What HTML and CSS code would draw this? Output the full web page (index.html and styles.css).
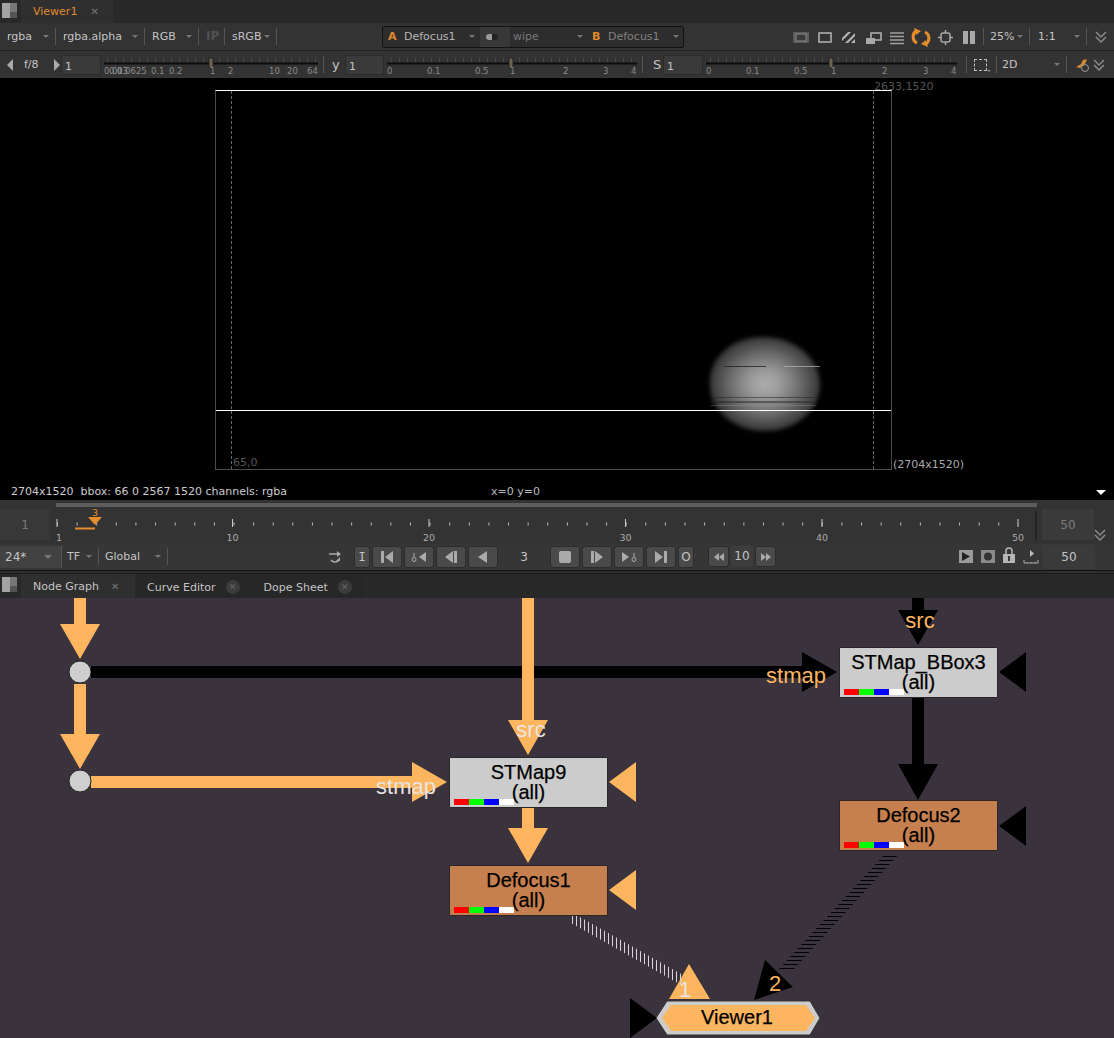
FILE: index.html
```html
<!DOCTYPE html>
<html lang="en">

<head>
  <meta charset="UTF-8">
  <meta name="viewport" content="width=device-width, initial-scale=1.0">
  <title>Viewer1 - Node Graph</title>
  <link rel="stylesheet" href="styles.css">
</head>

<body>
  <!-- viewer panel -->
  <div class="tabbar tabbar-top">
    <div class="panel-icon"><i></i><i></i></div>
    <div class="tab tab-viewer"><span class="tab-orange">Viewer1</span><span class="tab-x">&#10005;</span></div>
  </div>

  <div class="row row-one">
    <div class="combo w56">rgba<b class="arrow"></b></div>
    <div class="combo w89">rgba.alpha<b class="arrow"></b></div>
    <div class="combo w54">RGB<b class="arrow"></b></div>
    <div class="combo w26 dim">IP</div>
    <div class="combo w52">sRGB<b class="arrow"></b></div>
    <div class="wipe-box">
      <span class="letter">A</span>
      <span class="wipe-name w66">Defocus1</span>
      <b class="arrow"></b>
      <span class="toggle"><i></i></span>
      <span class="wipe-label">wipe</span>
      <b class="arrow arrow-wipe"></b>
      <span class="letter letter-b">B</span>
      <span class="wipe-name wipe-name-b">Defocus1</span>
      <b class="arrow"></b>
    </div>
    <svg class="tool-icons" width="190" height="22" viewBox="790 26 190 22">
      <rect x="793" y="32" width="16" height="11" fill="#5b5b5b" />
      <rect x="796" y="34" width="10" height="7" fill="#3a3a3a" stroke="#8a8a8a" />
      <rect x="819" y="33" width="12" height="9" fill="none" stroke="#b5b5b5" stroke-width="1.5" />
      <path d="M842 38l6-6h3l-9 9zM845 43l10-10v3l-7 7zM851 43l4-4v4z" fill="#b5b5b5" />
      <rect x="871" y="33" width="10" height="7" fill="none" stroke="#b5b5b5" stroke-width="1.5" />
      <rect x="866" y="38" width="9" height="6" fill="#a8a8a8" />
      <path d="M890 33h14M890 36.500h14M890 40h14M890 43.500h14" stroke="#a0a0a0" stroke-width="1.500" />
      <path d="M917 43a7 7 0 0 1-1-12M925 32a7 7 0 0 1 1 12" fill="none" stroke="#e58d2c" stroke-width="3" />
      <path d="M914 28l7 3-5 4zM928 47l-7-3 5-4z" fill="#e58d2c" />
      <rect x="941" y="33" width="9" height="9" rx="2" fill="none" stroke="#a8a8a8" stroke-width="1.5" />
      <path d="M945.500 30v3M945.500 42v3M938 37.500h3M950 37.500h3" stroke="#a8a8a8" stroke-width="1.500" />
      <rect x="963" y="31" width="5" height="13" fill="#a8a8a8" />
      <rect x="970" y="31" width="5" height="13" fill="#a8a8a8" />
    </svg>
    <div class="combo combo-zoom">25%<b class="arrow"></b></div>
    <div class="combo combo-ratio">1:1<b class="arrow"></b></div>
    <svg class="chevrons" width="12" height="12" viewBox="0 0 12 12">
      <path d="M1 1l5 5 5-5M1 6l5 5 5-5" />
    </svg>
  </div>

  <div class="row row-two">
    <svg class="step" width="8" height="12" viewBox="0 0 8 12"><path d="M7 0v12L1 6z" /></svg>
    <span class="fstop">f/8</span>
    <svg class="step step-next" width="8" height="12" viewBox="0 0 8 12"><path d="M1 0v12l6-6z" /></svg>
    <div class="value-box">1</div>
    <svg class="slider" width="214" height="27" viewBox="105 51 214 27">
      <path class="slider-ticks" d="M108 60h211" />
      <path class="slider-line" d="M105 63.500h214" />
      <rect class="slider-handle" x="210" y="58" width="4" height="10" />
      <text x="105" y="74">0.01</text>
      <text x="110" y="74">0.03</text>
      <text x="118" y="74">0.0625</text>
      <text x="152" y="74">0.1</text>
      <text x="170" y="74">0.2</text>
      <text x="211" y="74">1</text>
      <text x="229" y="74">2</text>
      <text x="270" y="74">10</text>
      <text x="288" y="74">20</text>
      <text x="308" y="74">64</text>
    </svg>
    <span class="row-sep sep-y"></span>
    <span class="channel channel-y">y</span>
    <div class="value-box value-y">1</div>
    <svg class="slider slider-y" width="250" height="27" viewBox="388 51 250 27">
      <path class="slider-ticks" d="M392 60h246" />
      <path class="slider-line" d="M388 63.500h250" />
      <rect class="slider-handle" x="510" y="58" width="4" height="10" />
      <text x="388" y="74">0</text>
      <text x="428" y="74">0.1</text>
      <text x="476" y="74">0.5</text>
      <text x="511" y="74">1</text>
      <text x="564" y="74">2</text>
      <text x="604" y="74">3</text>
      <text x="632" y="74">4</text>
    </svg>
    <span class="row-sep sep-s"></span>
    <span class="channel channel-s">S</span>
    <div class="value-box value-s">1</div>
    <svg class="slider slider-s" width="251" height="27" viewBox="707 51 251 27">
      <path class="slider-ticks" d="M711 60h247" />
      <path class="slider-line" d="M707 63.500h251" />
      <rect class="slider-handle" x="830" y="58" width="4" height="10" />
      <text x="707" y="74">0</text>
      <text x="747" y="74">0.1</text>
      <text x="795" y="74">0.5</text>
      <text x="832" y="74">1</text>
      <text x="883" y="74">2</text>
      <text x="924" y="74">3</text>
      <text x="952" y="74">4</text>
    </svg>
    <span class="row-sep sep-roi"></span>
    <span class="roi"></span>
    <div class="combo combo-mode">2D<b class="arrow"></b></div>
    <svg class="runner" width="16" height="16" viewBox="0 0 16 16">
      <path d="M2 10l5-3 2-4 4-1-2 5-5 4z" fill="#d98a32" />
      <circle cx="11" cy="11" r="3.500" fill="none" stroke="#999" />
    </svg>
    <svg class="chevrons chevrons-two" width="12" height="12" viewBox="0 0 12 12">
      <path d="M1 1l5 5 5-5M1 6l5 5 5-5" />
    </svg>
  </div>

  <div class="viewport">
    <div class="format">
      <div class="blob"></div>
      <div class="streak streak-a"></div>
      <div class="streak streak-b"></div>
      <div class="streak streak-c"></div>
      <div class="streak streak-d"></div>
      <div class="streak streak-e"></div>
      <div class="guide guide-left"></div>
      <div class="guide guide-right"></div>
      <div class="bbox-line"></div>
    </div>
    <span class="coord coord-top">2633,1520</span>
    <span class="coord coord-origin">65,0</span>
    <span class="coord coord-size">(2704x1520)</span>
  </div>

  <div class="infobar">
    <span class="info-main">2704x1520&nbsp; bbox: 66 0 2567 1520 channels: rgba</span>
    <span class="info-xy">x=0 y=0</span>
    <b class="info-menu"></b>
  </div>

  <!-- timeline -->
  <div class="timeline">
    <div class="range-box range-in">1</div>
    <svg class="ruler" width="992" height="44" viewBox="50 500 992 44">
      <rect x="56" y="503" width="981" height="4" fill="#5d5d5d" />
      <path class="minor" d="M57 524h961" />
      <path class="major" d="M57 519v8M232.500 519v8M429 519v8M625.500 519v8M822 519v8M1018 519v8" />
      <path d="M1036 511v30" stroke="#161616" />
      <path d="M75 528.500h20" stroke="#e58d2c" stroke-width="2" />
      <path d="M88 517h14l-7 8z" fill="#e58d2c" />
      <text class="frame-mark" x="95" y="516">3</text>
      <text x="59" y="541">1</text>
      <text x="232.500" y="541">10</text>
      <text x="429" y="541">20</text>
      <text x="625.500" y="541">30</text>
      <text x="822" y="541">40</text>
      <text x="1018" y="541">50</text>
    </svg>
    <div class="range-box range-out">50</div>
    <svg class="chevrons chevrons-time" width="12" height="12" viewBox="0 0 12 12">
      <path d="M1 1l5 5 5-5M1 6l5 5 5-5" />
    </svg>
  </div>

  <div class="playback">
    <div class="combo combo-rate">24*<b class="arrow"></b></div>
    <div class="combo combo-tf">TF<b class="arrow"></b></div>
    <div class="combo combo-global">Global<b class="arrow"></b></div>
    <svg class="loop" width="16" height="16" viewBox="0 0 16 16">
      <path d="M2 5h8M4 11a5 5 0 0 0 8 0" fill="none" stroke="#aaa" stroke-width="1.500" />
      <path d="M10 2l4 3-4 3zM13 8v4h-4z" fill="#aaa" />
    </svg>
    <div class="transport">
      <button class="pb pb-small">I</button>
      <button class="pb"><svg width="14" height="12" viewBox="0 0 14 12"><path d="M1 0h3v12H1zM13 0v12L5 6z" /></svg></button>
      <button class="pb"><svg width="16" height="12" viewBox="0 0 16 12"><path d="M15 1v10L8 6z" /><circle cx="3" cy="8.500" r="2" fill="none" stroke="#aaa" /><path d="M3 2v4" stroke="#aaa" /></svg></button>
      <button class="pb"><svg width="14" height="12" viewBox="0 0 14 12"><path d="M9 0v12L1 6zM10 0h3v12h-3z" /></svg></button>
      <button class="pb"><svg width="12" height="12" viewBox="0 0 12 12"><path d="M10 0v12L1 6z" /></svg></button>
      <div class="frame">3</div>
      <button class="pb"><svg width="12" height="12" viewBox="0 0 12 12"><rect width="12" height="12" rx="2" /></svg></button>
      <button class="pb"><svg width="14" height="12" viewBox="0 0 14 12"><path d="M1 0h3v12H1zM5 0v12l8-6z" /></svg></button>
      <button class="pb"><svg width="16" height="12" viewBox="0 0 16 12"><path d="M1 1v10l7-5z" /><circle cx="13" cy="8.500" r="2" fill="none" stroke="#aaa" /><path d="M13 2v4" stroke="#aaa" /></svg></button>
      <button class="pb"><svg width="14" height="12" viewBox="0 0 14 12"><path d="M1 0v12l8-6zM10 0h3v12h-3z" /></svg></button>
      <button class="pb pb-small pb-out">O</button>
      <button class="pb pb-step"><svg width="12" height="8" viewBox="0 0 12 8"><path d="M6 0v8L1 4zM11 0v8L6 4z" /></svg></button>
      <div class="frame-step">10</div>
      <button class="pb pb-step"><svg width="12" height="8" viewBox="0 0 12 8"><path d="M1 0v8l5-4zM6 0v8l5-4z" /></svg></button>
    </div>
    <svg class="range-icons" width="80" height="22" viewBox="958 546 80 22">
      <rect x="958" y="550" width="14" height="13" fill="#9a9a9a" />
      <path d="M961 552v9l8-4.500z" fill="#222" />
      <rect x="980" y="550" width="14" height="13" fill="#8a8a8a" />
      <circle cx="987" cy="556.500" r="4" fill="#333" />
      <path d="M1005 554v-3a3 3 0 0 1 6 0v3" fill="none" stroke="#b5b5b5" stroke-width="1.500" />
      <rect x="1002" y="554" width="12" height="9" fill="#b5b5b5" />
      <rect x="1007" y="556" width="2" height="5" fill="#333" />
      <path d="M1023 560v3h14v-3M1026 562v1M1030 562v1M1034 562v1" fill="none" stroke="#aaa" />
      <path d="M1029 550v7l4-3.500z" fill="#bbb" />
    </svg>
    <div class="range-box range-last">50</div>
  </div>

  <!-- node graph panel -->
  <div class="tabbar tabbar-graph">
    <div class="panel-icon"><i></i><i></i></div>
    <div class="tab tab-graph">Node Graph<span class="tab-x">&#10005;</span></div>
    <div class="tab-back">
      <span class="back-curve">Curve Editor</span><span class="tab-dot">&#10005;</span>
      <span class="back-dope">Dope Sheet</span><span class="tab-dot">&#10005;</span>
    </div>
  </div>

  <div class="graph">
    <svg class="wires" width="1114" height="440" viewBox="0 598 1114 440">
      <defs>
        <pattern id="hatch-white" width="4" height="4" patternUnits="userSpaceOnUse">
          <rect width="1" height="4" fill="#d8d4d8" />
        </pattern>
        <pattern id="hatch-black" width="4" height="4" patternUnits="userSpaceOnUse">
          <rect width="4" height="1" fill="#000" />
        </pattern>
      </defs>

      <!-- black pipes -->
      <path class="pipe-black" d="M91 672h712M918 598v14M918 697v69" />
      <path class="head-black" d="M802 652l35 20-35 20zM898 610h40l-20 35zM898 764h40l-20 36z" />
      <path class="head-black" d="M1026 652l-27 20 27 20zM1026 806l-27 20 27 20z" />
      <polygon points="884,855 898,855 793,970 778,970" fill="url(#hatch-black)" />
      <path class="head-black" d="M765 960l28 27-39 13zM630 998l27 20-27 20z" />

      <!-- orange pipes -->
      <path class="pipe-orange" d="M80 598v28M80 684v52M528 598v124M528 807v23M91 782h322" />
      <path class="head-orange" d="M60 624h40l-20 35zM60 734h40l-20 35zM508 720h40l-20 35zM508 828h40l-20 35zM412 762l35 20-35 20z" />
      <path class="head-orange" d="M636 762l-27 20 27 20zM636 870l-27 20 27 20zM689 964l21 35h-41z" />
      <polygon points="571,912 683,975 683,986 571,923" fill="url(#hatch-white)" />

      <circle class="dot" cx="80" cy="672" r="11" />
      <circle class="dot" cx="80" cy="781" r="11" />

      <!-- viewer node -->
      <polygon class="viewer-outer" points="656,1018 667,1001 810,1001 820,1018 810,1035 667,1035" />
      <polygon class="viewer-inner" points="662,1018 671,1005 806,1005 815,1018 806,1031 671,1031" />
      <text class="node-text" x="737" y="1024">Viewer1</text>

      <text class="label label-white" x="531" y="737">src</text>
      <text class="label label-white" x="406" y="794">stmap</text>
      <text class="label label-orange" x="796" y="683">stmap</text>
      <text class="label label-orange" x="920" y="628">src</text>
      <text class="label label-white" x="685" y="997">1</text>
      <text class="label label-orange" x="775" y="991">2</text>
    </svg>

    <div class="node node-grey node-stmap9">STMap9<br>(all)
      <div class="strip"><i class="red"></i><i class="green"></i><i class="blue"></i><i class="white"></i></div>
    </div>
    <div class="node node-brown node-defocus1">Defocus1<br>(all)
      <div class="strip"><i class="red"></i><i class="green"></i><i class="blue"></i><i class="white"></i></div>
    </div>
    <div class="node node-grey node-bbox3">STMap_BBox3<br>(all)
      <div class="strip"><i class="red"></i><i class="green"></i><i class="blue"></i><i class="white"></i></div>
    </div>
    <div class="node node-brown node-defocus2">Defocus2<br>(all)
      <div class="strip"><i class="red"></i><i class="green"></i><i class="blue"></i><i class="white"></i></div>
    </div>
  </div>
</body>

</html>
```

FILE: styles.css
```css
body {
  font-family: "DejaVu Sans", sans-serif;
  font-size: 11px;
  background-color: #2e2e2e;
  color: #c4c4c4;
  margin: 0;
  padding: 0;
  width: 1114px;
  height: 1038px;
  overflow: hidden;
}

/* tabs */
.tabbar {
  display: flex;
  background-color: #292929;
}

.tabbar-top {
  height: 23px;
}

.tabbar-graph {
  height: 25px;
  margin-top: 2px;
  border-top: 1px solid #1a1a1a;
  box-sizing: border-box;
}

.panel-icon {
  display: flex;
  width: 15px;
  height: 15px;
  margin: 3px 4px 0 2px;
}

.panel-icon i {
  flex: 1;
  background-color: #a3a3a3;
}

.panel-icon i:last-child {
  background: linear-gradient(#777 60%, #555 60%);
}

.tab {
  display: flex;
  align-items: center;
  background-color: #2f2f2f;
}

.tab-viewer {
  width: 92px;
  padding-left: 12px;
  box-sizing: border-box;
}

.tab-orange {
  color: #e08a2e;
}

.tab-x {
  margin-left: 13px;
  font-size: 10px;
  color: #777;
}

.tab-graph {
  width: 114px;
  padding-left: 12px;
  box-sizing: border-box;
}

.tab-graph .tab-x {
  margin-left: 12px;
}

.tab-back {
  display: flex;
  align-items: center;
  height: 24px;
  width: 230px;
  background-color: #272727;
  padding-top: 2px;
  box-sizing: border-box;
}

.back-curve {
  margin-left: 12px;
}

.back-dope {
  margin-left: 24px;
}

.tab-dot {
  width: 14px;
  height: 14px;
  line-height: 14px;
  margin-left: 10px;
  text-align: center;
  font-size: 9px;
  color: #666;
  background-color: #3c3c3c;
  border-radius: 50%;
}

/* toolbars */
.row {
  display: flex;
  align-items: center;
  background-color: #333;
  box-sizing: border-box;
}

.row-one {
  height: 28px;
  border-bottom: 1px solid #222;
}

.row-two {
  height: 27px;
}

.combo {
  position: relative;
  height: 17px;
  line-height: 17px;
  padding-left: 7px;
  box-sizing: border-box;
  border-right: 1px solid #555;
  flex-shrink: 0;
}

.w56 {
  width: 56px;
}

.w89 {
  width: 89px;
}

.w54 {
  width: 54px;
}

.w26 {
  width: 26px;
}

.w52 {
  width: 52px;
}

.dim {
  color: #505050;
  font-size: 12px;
  font-weight: bold;
}

.arrow {
  display: inline-block;
  border: 3px solid transparent;
  border-top: 3px solid #777;
  border-bottom: 0;
}

.combo .arrow {
  position: absolute;
  right: 6px;
  top: 7px;
}

.wipe-box {
  display: flex;
  align-items: center;
  width: 302px;
  height: 22px;
  margin-left: 105px;
  padding-left: 5px;
  box-sizing: border-box;
  background-color: #2d2d2d;
  border: 1px solid #111;
  border-radius: 2px;
  flex-shrink: 0;
}

.letter {
  width: 16px;
  color: #e08a2e;
  font-weight: bold;
}

.letter-b {
  margin-left: 9px;
  width: 16px;
}

.wipe-name {
  color: #b5b5b5;
}

.w66 {
  width: 65px;
}

.wipe-name-b {
  width: 65px;
  color: #808080;
}

.toggle {
  display: flex;
  align-items: center;
  width: 30px;
  height: 20px;
  margin-left: 5px;
  padding-left: 6px;
  box-sizing: border-box;
  background-color: #383838;
}

.toggle i {
  width: 12px;
  height: 6px;
  border-radius: 3px;
  background: linear-gradient(90deg, #999 50%, #222 50%);
}

.wipe-label {
  margin-left: 3px;
  width: 64px;
  color: #777;
}

.arrow-wipe {
  margin-right: 0;
}

.tool-icons {
  margin-left: 106px;
  flex-shrink: 0;
}

.combo-zoom {
  width: 47px;
  margin-left: 3px;
  border-left: 1px solid #555;
  padding-left: 6px;
}

.combo-ratio {
  width: 57px;
  padding-left: 8px;
}

.chevrons {
  flex-shrink: 0;
  margin-left: 8px;
}

.chevrons path {
  fill: none;
  stroke: #8a8a8a;
  stroke-width: 1.5;
}

/* second row */
.step {
  flex-shrink: 0;
  fill: #aaa;
  margin-left: 6px;
}

.fstop {
  margin-left: 10px;
  width: 24px;
  font-size: 11px;
}

.step-next {
  margin-left: 5px;
  margin-right: 0;
}

.value-box {
  width: 40px;
  height: 20px;
  line-height: 21px;
  padding-left: 3px;
  box-sizing: border-box;
  background-color: #3a3a3a;
  border: 1px solid #2a2a2a;
  border-radius: 2px;
  flex-shrink: 0;
}

.slider {
  margin-left: 3px;
  flex-shrink: 0;
}

.slider text {
  font-size: 8.5px;
  fill: #8a8a8a;
}

.slider-ticks {
  stroke: #484848;
  stroke-width: 5;
  stroke-dasharray: 1 7;
}

.slider-line {
  stroke: #0c0c0c;
  stroke-width: 2;
}

.slider-handle {
  fill: #6e6450;
  stroke: #222;
}

.row-sep {
  width: 1px;
  height: 17px;
  background-color: #555;
  flex-shrink: 0;
}

.sep-y {
  margin-left: 5px;
}

.channel {
  font-size: 13px;
  flex-shrink: 0;
}

.channel-y {
  margin-left: 8px;
  width: 13px;
}

.value-y {
  width: 39px;
}

.slider-y {
  margin-left: 3px;
}

.sep-s {
  margin-left: 5px;
}

.channel-s {
  margin-left: 10px;
  width: 10px;
}

.slider-s {
  margin-left: 3px;
}

.sep-roi {
  margin-left: 9px;
}

.roi {
  position: relative;
  width: 13px;
  height: 12px;
  margin-left: 7px;
  border: 1px dashed #bbb;
  box-sizing: border-box;
  flex-shrink: 0;
}

.roi::after {
  content: "";
  position: absolute;
  right: -5px;
  bottom: -2px;
  border: 2px solid transparent;
  border-top: 2px solid #888;
  border-bottom: 0;
}

.combo-mode {
  width: 71px;
  margin-left: 9px;
  padding-left: 5px;
  border-left: 1px solid #555;
}

.runner {
  margin-left: 7px;
  flex-shrink: 0;
}

.chevrons-two {
  margin-left: 3px;
}

/* viewer canvas */
.viewport {
  position: relative;
  height: 405px;
  background-color: #000;
}

.format {
  position: absolute;
  left: 215px;
  top: 12px;
  width: 677px;
  height: 380px;
  box-sizing: border-box;
  border: 1px solid #4c4c4c;
  border-top: 1px solid #fff;
  overflow: hidden;
}

.blob {
  position: absolute;
  left: 494px;
  top: 246px;
  width: 110px;
  height: 94px;
  border-radius: 48% 52% 50% 50%;
  background: radial-gradient(ellipse at 50% 50%, #adadad 0%, #9a9a9a 20%, #737373 42%, #484848 62%, #242424 80%, #0a0a0a 94%, #000 100%);
  filter: blur(2px);
}

.streak {
  position: absolute;
  height: 1px;
}

.streak-a {
  left: 508px;
  top: 275px;
  width: 42px;
  background-color: rgba(30, 30, 30, 0.75);
}

.streak-b {
  left: 568px;
  top: 275px;
  width: 36px;
  background-color: rgba(170, 170, 170, 0.8);
}

.streak-c {
  left: 495px;
  top: 306px;
  width: 105px;
  background-color: rgba(40, 40, 40, 0.55);
}

.streak-d {
  left: 495px;
  top: 310px;
  width: 105px;
  height: 2px;
  background-color: rgba(40, 40, 40, 0.5);
}

.streak-e {
  left: 495px;
  top: 314px;
  width: 105px;
  background-color: rgba(150, 150, 150, 0.35);
}

.guide {
  position: absolute;
  top: 0;
  bottom: 0;
  border-left: 1px dashed #666;
}

.guide-left {
  left: 15px;
}

.guide-right {
  left: 657px;
}

.bbox-line {
  position: absolute;
  left: 0;
  right: 0;
  top: 319px;
  height: 1px;
  background-color: #fff;
}

.coord {
  position: absolute;
  color: #555;
}

.coord-top {
  left: 874px;
  top: 2px;
}

.coord-origin {
  left: 233px;
  top: 378px;
}

.coord-size {
  left: 893px;
  top: 380px;
  color: #aaa;
}

.infobar {
  position: relative;
  display: flex;
  align-items: center;
  height: 17px;
  background-color: #000;
  color: #ccc;
}

.info-main {
  margin-left: 11px;
  width: 480px;
}

.info-xy {
  color: #bbb;
}

.info-menu {
  position: absolute;
  right: 8px;
  top: 7px;
  border: 5px solid transparent;
  border-top: 5px solid #fff;
  border-bottom: 0;
}

/* timeline */
.timeline {
  display: flex;
  height: 44px;
  background-color: #333;
}

.ruler text {
  font-size: 9.5px;
  fill: #aaa;
  text-anchor: middle;
}

.ruler .frame-mark {
  fill: #e58d2c;
}

.minor {
  stroke: #bbb;
  stroke-width: 3;
  stroke-dasharray: 1 18.61;
}

.major {
  stroke: #ccc;
  fill: none;
}

.range-box {
  width: 50px;
  text-align: center;
  background-color: #3a3a3a;
  color: #7a7a7a;
  font-size: 12px;
  flex-shrink: 0;
}

.range-in {
  height: 31px;
  margin-top: 9px;
  line-height: 32px;
  background-color: #383838;
}

.range-out {
  width: 52px;
  height: 31px;
  margin: 9px 0 0 0;
  line-height: 32px;
}

.chevrons-time {
  margin-left: 0;
  margin-top: 29px;
}

.playback {
  display: flex;
  align-items: center;
  height: 27px;
  padding-bottom: 1px;
  box-sizing: border-box;
  background-color: #363636;
  border-bottom: 1px solid #111;
}

.combo-rate {
  width: 62px;
  height: 22px;
  line-height: 22px;
  padding-left: 5px;
  font-size: 12px;
  background-color: #424242;
}

.combo-rate .arrow {
  top: 9px;
  right: 9px;
  border-width: 4px;
  border-bottom: 0;
}

.combo-tf {
  width: 37px;
  padding-left: 5px;
}

.combo-global {
  width: 69px;
  padding-left: 6px;
}

.loop {
  margin-left: 159px;
  flex-shrink: 0;
}

.transport {
  display: flex;
  align-items: center;
  gap: 2px;
  margin-left: 11px;
}

.pb {
  display: flex;
  align-items: center;
  justify-content: center;
  width: 30px;
  height: 22px;
  padding: 0;
  font-family: "DejaVu Sans Mono", monospace;
  font-size: 12px;
  color: #c4c4c4;
  background-color: #4a4a4a;
  border: 1px solid #2c2c2c;
  border-radius: 3px;
}

.pb svg {
  fill: #aaa;
}

.pb-small {
  width: 16px;
}

.pb-out {
  margin-right: 12px;
  font-family: "DejaVu Sans", sans-serif;
}

.pb-step {
  width: 21px;
  height: 21px;
}

.frame {
  width: 48px;
  text-align: center;
  font-size: 12px;
}

.frame-step {
  width: 22px;
  height: 21px;
  line-height: 21px;
  text-align: center;
  font-size: 12px;
  background-color: #3d3d3d;
  border-radius: 3px;
}

.range-icons {
  margin-left: 183px;
  flex-shrink: 0;
}

.range-last {
  width: 52px;
  height: 24px;
  line-height: 24px;
  margin-left: 4px;
  color: #c4c4c4;
}

/* node graph */
.graph {
  position: relative;
  height: 440px;
  background-color: #3a333e;
  overflow: hidden;
}

.wires {
  position: absolute;
  left: 0;
  top: 0;
}

.pipe-black {
  fill: none;
  stroke: #000;
  stroke-width: 12;
}

.pipe-orange {
  fill: none;
  stroke: #fdb55f;
  stroke-width: 12;
}

.head-black {
  fill: #000;
}

.head-orange {
  fill: #fdb55f;
}

.dot {
  fill: #cfcfcf;
  stroke: #222;
}

.viewer-outer {
  fill: #ccc;
  stroke: #333;
}

.viewer-inner {
  fill: #fdb55f;
}

.wires text {
  font-family: "Liberation Sans", Arial, sans-serif;
  text-anchor: middle;
}

.node-text {
  font-size: 20px;
  fill: #000;
  stroke: #000;
  stroke-width: 0.25;
}

.label {
  font-size: 22px;
}

.label-white {
  fill: #e8e4e0;
}

.label-orange {
  fill: #fdb55f;
}

.node {
  position: absolute;
  z-index: 0;
  width: 159px;
  height: 51px;
  box-sizing: border-box;
  padding-top: 4px;
  text-align: center;
  font-family: "Liberation Sans", Arial, sans-serif;
  font-size: 20px;
  line-height: 20px;
  color: #000;
  -webkit-text-stroke: 0.25px #000;
  border: 1px solid #2a2528;
  border-radius: 1px;
}

.node-grey {
  background-color: #ccc;
}

.node-brown {
  background-color: #c67f4e;
}

.node-stmap9 {
  left: 449px;
  top: 159px;
}

.node-defocus1 {
  left: 449px;
  top: 267px;
}

.node-bbox3 {
  left: 839px;
  top: 49px;
}

.node-defocus2 {
  left: 839px;
  top: 202px;
}

.strip {
  position: absolute;
  left: 4px;
  bottom: 2px;
  display: flex;
  width: 60px;
  height: 6px;
  z-index: -1;
}

.strip i {
  flex: 1;
}

.red {
  background-color: #f00;
}

.green {
  background-color: #0f0;
}

.blue {
  background-color: #00f;
}

.white {
  background-color: #fff;
}
```
